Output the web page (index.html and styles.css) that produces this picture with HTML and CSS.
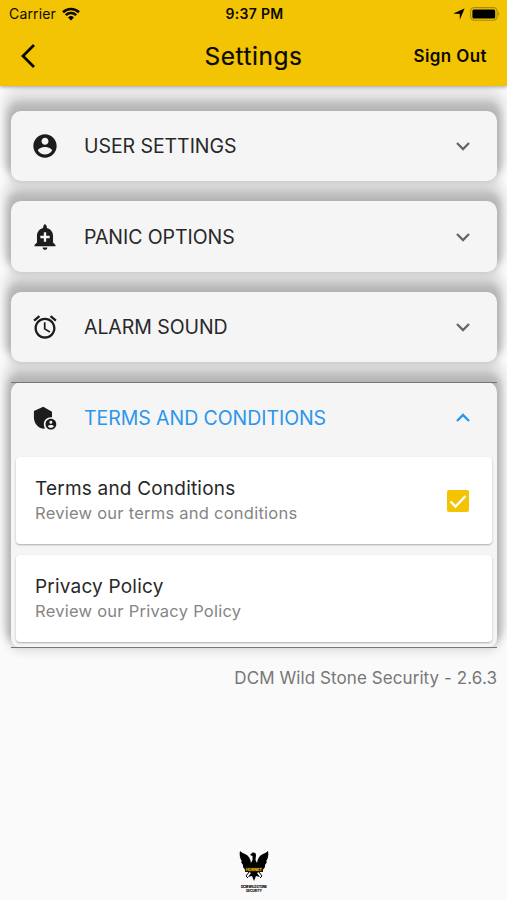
FILE: index.html
```html
<!DOCTYPE html>
<html lang="en">
<head>
<meta charset="utf-8">
<title>Settings</title>
<link rel="stylesheet" href="styles.css">
</head>
<body>
<header class="top">
  <div class="status">
    <div class="carrier"><span class="carrier-name">Carrier</span>
      <svg class="wifi" viewBox="0 0 18 14"><path d="M9 13.4 6.1 10.5a4.2 4.2 0 0 1 5.8 0z"/><path class="arc" d="M3.8 8.1a7.5 7.5 0 0 1 10.4 0M1 5.2a11.5 11.5 0 0 1 16 0"/></svg>
    </div>
    <span class="clock">9:37 PM</span>
    <div class="indicators">
      <svg class="location" viewBox="0 0 12 12"><path d="M11.600.4 6.800 11.800V6L.3 5.400z"/></svg>
      <svg class="battery" viewBox="0 0 30 14"><rect class="shell" x=".6" y=".6" width="26.500" height="12.600" rx="3.600"/><rect x="2.400" y="2.400" width="22.800" height="9" rx="1.500"/><path class="tip" d="M28.200 4.600q1.800 2.200 0 4.400z"/></svg>
    </div>
  </div>
  <nav class="bar">
    <svg class="back" viewBox="0 0 16 26"><path d="M14 2 3 13l11 11"/></svg>
    <h1>Settings</h1>
    <span class="signout">Sign Out</span>
  </nav>
</header>
<main>
  <section class="card first">
    <div class="row">
      <svg class="icon" viewBox="0 0 24 24"><path d="M12 2C6.480 2 2 6.480 2 12s4.480 10 10 10 10-4.480 10-10S17.520 2 12 2zm0 3c1.660 0 3 1.340 3 3s-1.340 3-3 3-3-1.340-3-3 1.340-3 3-3zm0 14.200c-2.500 0-4.710-1.280-6-3.220.03-1.990 4-3.080 6-3.080 1.990 0 5.970 1.090 6 3.080-1.290 1.940-3.500 3.220-6 3.220z"/></svg>
      <h2>USER SETTINGS</h2>
      <svg class="chevron" viewBox="0 0 16 10"><path d="m2 2 6 6 6-6"/></svg>
    </div>
  </section>
  <section class="card second">
    <div class="row">
      <svg class="icon" viewBox="0 0 24 24"><path d="M10.010 21.010c0 1.100.89 1.990 1.990 1.990s1.990-.89 1.990-1.990h-3.980zm8.870-4.190V11c0-3.250-2.250-5.970-5.290-6.690v-.72C13.590 2.710 12.880 1 12 1s-1.590 1.710-1.590 2.590v.72C7.370 5.030 5.120 7.750 5.120 11v5.820L3 18.940V20h18v-1.060l-2.120-2.120zM16 13.010h-3v3h-2v-3H8V11h3V8h2v3h3v2.010z"/></svg>
      <h2>PANIC OPTIONS</h2>
      <svg class="chevron" viewBox="0 0 16 10"><path d="m2 2 6 6 6-6"/></svg>
    </div>
  </section>
  <section class="card third">
    <div class="row">
      <svg class="icon" viewBox="0 0 24 24"><path d="m22 5.720-4.600-3.860-1.290 1.530 4.600 3.860L22 5.720zM7.880 3.390 6.600 1.860 2 5.710l1.290 1.530 4.590-3.850zM12.500 8H11v6l4.750 2.850.75-1.230-4-2.370V8zM12 4c-4.970 0-9 4.030-9 9s4.020 9 9 9c4.970 0 9-4.030 9-9s-4.030-9-9-9zm0 16c-3.870 0-7-3.130-7-7s3.130-7 7-7 7 3.130 7 7-3.130 7-7 7z"/></svg>
      <h2>ALARM SOUND</h2>
      <svg class="chevron" viewBox="0 0 16 10"><path d="m2 2 6 6 6-6"/></svg>
    </div>
  </section>
  <section class="card open">
    <div class="row">
      <svg class="icon" viewBox="0 0 24 24"><path d="M17 11c.34 0 .67.040 1 .09V6.270L10.500 2 2.500 5.800v5.380c0 4.540 3.200 8.790 8 9.820.55-.13 1.080-.32 1.600-.55-.69-.98-1.100-2.170-1.100-3.450 0-3.310 2.690-6 6-6z" transform="translate(0 .3)"/><path fill-rule="evenodd" transform="translate(-2.500 -2.200) scale(1.150)" d="M17 13c-2.210 0-4 1.790-4 4s1.790 4 4 4 4-1.790 4-4-1.790-4-4-4zm0 1.380c.62 0 1.120.51 1.120 1.120s-.51 1.120-1.120 1.120-1.120-.51-1.120-1.120.5-1.120 1.120-1.120zm0 5.370c-.93 0-1.740-.46-2.240-1.170.05-.72 1.510-1.080 2.240-1.080s2.190.36 2.240 1.080c-.5.71-1.310 1.170-2.240 1.170z"/></svg>
      <h2>TERMS AND CONDITIONS</h2>
      <svg class="chevron" viewBox="0 0 16 10"><path d="m2 8 6-6 6 6"/></svg>
    </div>
    <div class="items">
      <div class="item">
        <div><h3>Terms and Conditions</h3><p>Review our terms and conditions</p></div>
        <svg class="check" viewBox="0 0 22 22"><rect width="22" height="22" rx="2"/><path d="m3.500 11.500 5 5L18.500 6"/></svg>
      </div>
      <div class="item">
        <div><h3>Privacy Policy</h3><p>Review our Privacy Policy</p></div>
      </div>
    </div>
  </section>
  <p class="version">DCM Wild Stone Security - 2.6.3</p>
</main>
<footer>
  <svg class="logo" viewBox="0 0 30 44">
    <path d="M1 1q2 2 5 3 5 2 6 9l1.500-3V6L11 5l2.500-2.500Q17 2 17 5l-.5 5L18 13q1-7 6-9 3-1 5-3 1 5-1 9l-1 1 1 1-2 3v2l-3 4-3 1-2 1 3 4-4-1-2 5-2-5-4 1 3-4-2-1-3-1-3-4v-2l-2-3 1-1-1-1Q0 6 1 1z"/>
    <path class="tail" d="m10 22-3 4 2 2m11-6 3 4-2 2"/>
    <rect class="ribbon" x="6" y="17" width="18" height="5"/>
    <text class="ribbon-text" x="15" y="21" textLength="16">HORNET</text>
    <text x="15" y="37.500" textLength="26">DCM WILD STONE</text>
    <text x="15" y="41.500" textLength="16">SECURITY</text>
  </svg>
</footer>
</body>
</html>
```
FILE: styles.css
```css
* { box-sizing: border-box; }
body { margin: 0; height: 900px; display: flex; flex-direction: column; background: #fafafa; color: #282828; font-family: Inter, "Liberation Sans", sans-serif; overflow: hidden; }
h1, h2, h3, p { margin: 0; font-weight: 400; white-space: nowrap; }
svg { display: block; flex: none; overflow: visible; }
.top { position: relative; z-index: 5; height: 86px; flex: none; background: #f3c404; color: #0b0a00; box-shadow: 0 1px 4px rgba(0,0,0,.35); }
.status { height: 27px; display: grid; grid-template-columns: 1fr auto 1fr; align-items: center; padding: 0 7px 0 9px; font-size: 14px; }
.carrier { display: flex; align-items: center; gap: 6px; }
.carrier-name { letter-spacing: .15px; }
.wifi { width: 18px; height: 14px; }
.wifi .arc { fill: none; stroke: #0b0a00; stroke-width: 2.6; }
.clock { font-weight: 600; font-size: 14px; letter-spacing: .3px; }
.indicators { display: flex; justify-content: flex-end; align-items: center; gap: 5px; }
.location { width: 12px; height: 12px; }
.battery { width: 30px; height: 14px; }
.shell { fill: none; stroke: #a98a0c; stroke-width: 1.1; }
.tip { fill: #8f7610; }
.bar { height: 58px; display: grid; grid-template-columns: 1fr auto 1fr; align-items: center; padding: 0 20px; }
.back { width: 16px; height: 26px; }
.back path { fill: none; stroke: #0b0a00; stroke-width: 2.8; }
h1 { font-size: 24.5px; font-weight: 400; letter-spacing: .5px; -webkit-text-stroke: .2px #0b0a00; }
.signout { justify-self: end; font-size: 17px; font-weight: 600; letter-spacing: .4px; }
main { padding: 24.8px 10px 0 11px; display: flex; flex-direction: column; gap: 20px; }
.card { position: relative; height: 70.4px; border-radius: 10px; background: #f5f5f5; box-shadow: 0 -7px 6px 4px rgba(0,0,0,.15), 0 -14px 8px 9px rgba(0,0,0,.09), 0 1px 8px 4px rgba(0,0,0,.09); }
.first { z-index: 4; }
.second { z-index: 3; }
.third { z-index: 2; }
.row { height: 70.4px; display: flex; align-items: center; padding: 1px 26px 0 20px; }
.icon { width: 28px; height: 28px; fill: #1c1c1e; }
.row h2 { margin-left: 25px; font-size: 19.5px; letter-spacing: -.06px; }
.chevron { width: 16px; height: 10px; margin-left: auto; }
.chevron path { fill: none; stroke: #666; stroke-width: 2.3; }
.open { height: 266px; }
.open::before, .open::after { content: ""; position: absolute; left: 0; right: 0; height: 1px; background: #777; }
.open::before { top: 0; }
.open::after { bottom: 0; }
.open h2 { color: #2c96ec; }
.open .chevron path { stroke: #2196f3; }
.items { padding: 4.6px 5px 0; display: flex; flex-direction: column; gap: 11px; }
.item { height: 87px; display: flex; align-items: center; justify-content: space-between; padding: 1.5px 23px 0 19px; background: #fff; border-radius: 4px; box-shadow: 0 1px 2px rgba(0,0,0,.3); }
.item h3 { font-size: 19px; line-height: 25px; letter-spacing: .2px; }
.item p { font-size: 16.5px; line-height: 25px; letter-spacing: .25px; color: #858585; }
.check { width: 22px; height: 22px; fill: #f3c404; }
.check path { fill: none; stroke: #fff; stroke-width: 2.3; }
.version { align-self: flex-end; font-size: 17px; line-height: 20px; letter-spacing: .08px; color: #777; }
footer { margin-top: auto; height: 50px; display: flex; justify-content: center; }
.logo { width: 30px; height: 44px; }
.logo text { font-size: 3.2px; font-weight: 800; text-anchor: middle; }
.logo .tail { fill: none; stroke: #000; stroke-width: 1; }
.logo .ribbon { fill: #1b1600; }
.logo .ribbon-text { fill: #f3b900; font-size: 4px; }
```
